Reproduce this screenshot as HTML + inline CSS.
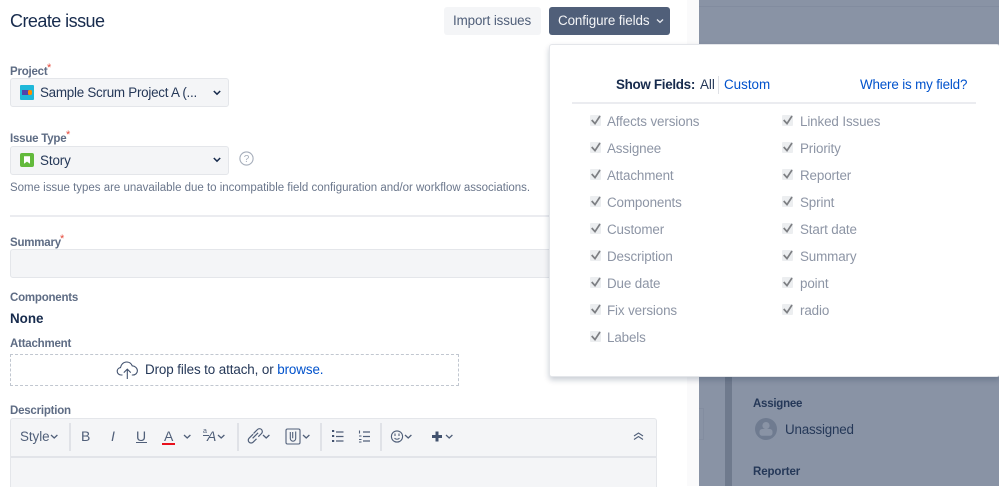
<!DOCTYPE html>
<html><head><meta charset="utf-8"><style>
html,body{margin:0;padding:0}
body{width:999px;height:486px;overflow:hidden;position:relative;background:#fff;font-family:"Liberation Sans",sans-serif;color:#172b4d}
.a{position:absolute}
.t{position:absolute;white-space:nowrap;line-height:16px}
.lbl{font-size:11.5px;font-weight:bold;color:#5e6c84;letter-spacing:-.22px}
.req{position:absolute;color:#e5493a;font-size:11px;line-height:10px}
.sel{position:absolute;left:10px;width:217px;height:27px;background:#f4f5f7;border:1px solid #e4e6ea;border-radius:3px}
.cb{position:absolute;width:11px;height:11px;background:#eceef0;border-radius:1px}
.cb svg{position:absolute;left:0;top:-2px}
.f{position:absolute;font-size:13.4px;color:#8d95a5;white-space:nowrap;line-height:16px;letter-spacing:-.12px}
.d{position:absolute;top:423px;width:2px;height:28px;background:#e0e2e7}
</style></head><body>
<svg width="0" height="0" style="position:absolute"><defs><symbol id="c" viewBox="0 0 12 12"><path d="M1.700 7 5 10.600 10 3" fill="none" stroke="#7d7f83" stroke-width="1.700"/></symbol></defs></svg>

<!-- right dimmed background -->
<div class="a" style="left:687px;top:0;width:12px;height:486px;background:#fafafb"></div>
<div class="a" style="left:699px;top:0;width:300px;height:486px;background:#8993a5"></div>
<div class="a" style="left:699px;top:6px;width:300px;height:1px;background:#828c9f"></div>
<div class="a" style="left:725px;top:370px;width:7px;height:116px;background:#6f7a8d"></div>
<div class="a" style="left:699px;top:408px;width:4px;height:30px;border:1px solid #838da0;border-left:0"></div>
<div class="t" style="left:753px;top:396px;font-size:11.5px;font-weight:bold;color:#253858;letter-spacing:-.25px">Assignee</div>
<svg class="a" style="left:754px;top:417px" width="24" height="24" viewBox="0 0 24 24"><circle cx="12" cy="12" r="11" fill="#6f7b90"/><circle cx="12" cy="8.600" r="3.600" fill="#8993a5"/><rect x="5.500" y="12" width="13" height="6.800" rx="2.600" fill="#8993a5"/></svg>
<div class="t" style="left:785px;top:422px;font-size:13.4px;color:#253858;letter-spacing:-.2px">Unassigned</div>
<div class="t" style="left:753px;top:464px;font-size:11.5px;font-weight:bold;color:#253858;letter-spacing:-.1px">Reporter</div>

<!-- header -->
<div class="t" style="left:10px;top:11px;font-size:18px;line-height:21px;color:#172b4d;letter-spacing:-.55px">Create issue</div>
<div class="a" style="left:444px;top:7px;width:97px;height:28px;background:#f4f5f7;border-radius:3px"></div>
<div class="t" style="left:453px;top:13px;font-size:13.4px;color:#505f79;letter-spacing:-.12px">Import issues</div>
<div class="a" style="left:549px;top:7px;width:121px;height:28px;background:#505f79;border-radius:3px"></div>
<div class="t" style="left:558px;top:13px;font-size:13.4px;color:#f4f5f7;letter-spacing:-.1px">Configure fields</div>
<svg class="a" style="left:655px;top:17px" width="10" height="8" viewBox="0 0 10 8"><path d="M2 2.500 5 5.300 8 2.500" fill="none" stroke="#e6e8ee" stroke-width="1.300"/></svg>

<!-- project -->
<div class="t lbl" style="left:10px;top:64px">Project</div>
<div class="req" style="left:47px;top:63px">*</div>
<div class="sel" style="top:78px"></div>
<svg class="a" style="left:20px;top:85px" width="14" height="15" viewBox="0 0 14 15"><rect width="14" height="15" rx="1" fill="#1fb8d9"/><rect x="2" y="5" width="6.500" height="5" fill="#5243aa"/><rect x="8" y="5" width="4" height="5" rx="1.500" fill="#ff8b00"/></svg>
<div class="t" style="left:40px;top:85px;font-size:13.4px;color:#253858;letter-spacing:-.25px">Sample Scrum Project A (...</div>
<svg class="a" style="left:212px;top:89px" width="10" height="8" viewBox="0 0 10 8"><path d="M1.800 2 5 5.200 8.200 2" fill="none" stroke="#172b4d" stroke-width="1.500"/></svg>

<!-- issue type -->
<div class="t lbl" style="left:10px;top:131px">Issue Type</div>
<div class="req" style="left:66px;top:130px">*</div>
<div class="sel" style="top:146px"></div>
<svg class="a" style="left:20px;top:153px" width="14" height="14" viewBox="0 0 14 14"><rect width="14" height="14" rx="2" fill="#63ba3c"/><path d="M4 3.200h6v7.600L7 8.600 4 10.800z" fill="#fff"/></svg>
<div class="t" style="left:40px;top:153px;font-size:13.4px;color:#253858;letter-spacing:-.1px">Story</div>
<svg class="a" style="left:212px;top:156px" width="10" height="8" viewBox="0 0 10 8"><path d="M1.800 2 5 5.200 8.200 2" fill="none" stroke="#172b4d" stroke-width="1.500"/></svg>
<svg class="a" style="left:239px;top:151px" width="15" height="15" viewBox="0 0 15 15"><circle cx="7.500" cy="7.500" r="6.600" fill="none" stroke="#a5adba" stroke-width="1.100"/><text x="7.500" y="11" text-anchor="middle" font-size="10" fill="#a5adba" font-family="Liberation Sans">?</text></svg>
<div class="t" style="left:10px;top:180px;font-size:11.5px;color:#6b778c;letter-spacing:-.015px">Some issue types are unavailable due to incompatible field configuration and/or workflow associations.</div>
<div class="a" style="left:10px;top:215px;width:540px;height:2px;background:#ebecf0"></div>

<!-- summary -->
<div class="t lbl" style="left:10px;top:235px">Summary</div>
<div class="req" style="left:60px;top:234px">*</div>
<div class="a" style="left:10px;top:249px;width:545px;height:27px;background:#f4f5f7;border:1px solid #e4e6ea;border-radius:3px"></div>

<!-- components -->
<div class="t lbl" style="left:10px;top:290px">Components</div>
<div class="t" style="left:10px;top:311px;font-size:13.4px;font-weight:bold;color:#172b4d">None</div>

<!-- attachment -->
<div class="t lbl" style="left:10px;top:336px">Attachment</div>
<div class="a" style="left:10px;top:354px;width:447px;height:30px;border:1px dashed #c1c7d0"></div>
<svg class="a" style="left:116px;top:360px" width="23" height="20" viewBox="0 0 23 20"><path d="M6.500 15H5.200C3 15 1.200 13.400 1.200 11.300c0-1.900 1.400-3.400 3.300-3.700C5 4.400 7.400 2 10.600 2c2.600 0 4.700 1.500 5.600 3.800 2.800.2 5.200 2.300 5.200 5 0 2.400-2 4.200-4.600 4.200h-1" fill="none" stroke="#42526e" stroke-width="1.100"/><path d="M11.300 19V9.500M7.800 12.600l3.500-3.500 3.500 3.500" fill="none" stroke="#42526e" stroke-width="1.100"/></svg>
<div class="t" style="left:145px;top:362px;font-size:13.4px;color:#253858;letter-spacing:-.1px">Drop files to attach, or <span style="color:#0052cc">browse.</span></div>

<!-- description -->
<div class="t lbl" style="left:10px;top:403px">Description</div>
<div class="a" style="left:10px;top:418px;width:645px;height:68px;background:#f4f5f7;border:1px solid #e4e6ea;border-bottom:0;border-radius:3px 3px 0 0"></div>
<div class="a" style="left:11px;top:456px;width:645px;height:2px;background:#e2e4e9"></div>
<div class="t" style="left:20px;top:429px;font-size:13.4px;color:#505f79;letter-spacing:-.05px">Style</div>
<div class="d" style="left:69px"></div>
<div class="d" style="left:237px"></div>
<div class="d" style="left:320px"></div>
<div class="d" style="left:380px"></div>
<div class="t" style="left:81px;top:428px;font-size:14px;color:#505f79">B</div>
<div class="t" style="left:111px;top:428px;font-size:14px;font-style:italic;color:#505f79">I</div>
<div class="t" style="left:136px;top:428px;font-size:14px;color:#505f79">U</div>
<div class="a" style="left:136px;top:442px;width:11px;height:1px;background:#505f79"></div>
<div class="t" style="left:164px;top:428px;font-size:14px;color:#505f79">A</div>
<div class="a" style="left:162px;top:443px;width:13px;height:2px;background:#e8101c"></div>
<div class="t" style="left:203px;top:424px;font-size:7px;color:#505f79">a</div>
<div class="t" style="left:207px;top:428px;font-size:14px;font-style:italic;color:#505f79">A</div>
<svg class="a" style="left:0;top:0" width="999" height="486" viewBox="0 0 999 486" fill="none" stroke="#505f79">
<path d="M51 435l3.200 3 3.200-3M184 435l3.200 3 3.200-3M218 435l3.200 3 3.200-3M263 435l3.200 3 3.200-3M303 435l3.200 3 3.200-3M405 435l3.200 3 3.200-3M446 435l3.200 3 3.200-3" stroke-width="1.300"/>
<path d="M203 435.500h6" stroke-width="1"/>
<path d="M253.500 433.500l4-4a2.800 2.800 0 0 1 4 4l-3.200 3.200M256.500 438.800l-3.400 3.400a2.800 2.800 0 0 1-4-4l4-4M252.600 438.300l5.500-5.500" stroke-width="1.200"/>
<rect x="286" y="429" width="14" height="15" rx="1.500" stroke-width="1.100"/>
<path d="M290.300 432v6.500a2.700 2.700 0 0 0 5.400 0V431.500M292.700 432v6.200" stroke-width="1.100"/>
<path d="M336 432h7.500M336 436.500h7.500M336 441h7.500" stroke-width="1.300"/>
<path d="M363 432h7M363 436.500h7M363 441h7" stroke-width="1.300"/>
<path d="M332 431h2.200M332 436h2.200M332 441h2.200" stroke="#42526e" stroke-width="2"/>
<path d="M359.500 430.500v3M359 436h2.500M359 439.500h2.500M359 442h2.500" stroke-width="1.100"/>
<circle cx="397" cy="436.500" r="5.600" stroke-width="1.100"/>
<path d="M395 433.500v2.500M399 433.500v2.500M394.500 438.200c1.500 1.300 3.500 1.300 5 0" stroke-width="1.100"/>
<path d="M437 431.500v10M432 436.500h10" stroke="#42526e" stroke-width="3"/>
<path d="M634 436l4.500-3 4.500 3M634 439.500l4.500-3 4.500 3" stroke-width="1.100"/>
</svg>

<!-- popup -->
<div class="a" style="left:549px;top:44px;width:449px;height:331px;background:#fff;border:1px solid #e4e6ea;border-radius:3px;box-shadow:0 3px 6px rgba(9,30,66,.22)"></div>
<div class="t" style="left:616px;top:77px;font-size:13.4px;font-weight:bold;color:#172b4d;letter-spacing:-.3px">Show Fields:</div>
<div class="t" style="left:700px;top:77px;font-size:13.4px;color:#253858">All</div>
<div class="a" style="left:718px;top:76px;width:1px;height:18px;background:#dfe1e6"></div>
<div class="t" style="left:724px;top:77px;font-size:13.4px;color:#0052cc">Custom</div>
<div class="t" style="left:860px;top:77px;font-size:13.4px;color:#0052cc;letter-spacing:-.16px">Where is my field?</div>
<div class="a" style="left:572px;top:102px;width:404px;height:2px;background:#ebecf0"></div>

<div class="cb" style="left:590px;top:115px"><svg width="12" height="12"><use href="#c"/></svg></div><div class="f" style="left:607px;top:114px">Affects versions</div>
<div class="cb" style="left:590px;top:142px"><svg width="12" height="12"><use href="#c"/></svg></div><div class="f" style="left:607px;top:141px">Assignee</div>
<div class="cb" style="left:590px;top:169px"><svg width="12" height="12"><use href="#c"/></svg></div><div class="f" style="left:607px;top:168px">Attachment</div>
<div class="cb" style="left:590px;top:196px"><svg width="12" height="12"><use href="#c"/></svg></div><div class="f" style="left:607px;top:195px">Components</div>
<div class="cb" style="left:590px;top:223px"><svg width="12" height="12"><use href="#c"/></svg></div><div class="f" style="left:607px;top:222px">Customer</div>
<div class="cb" style="left:590px;top:250px"><svg width="12" height="12"><use href="#c"/></svg></div><div class="f" style="left:607px;top:249px">Description</div>
<div class="cb" style="left:590px;top:277px"><svg width="12" height="12"><use href="#c"/></svg></div><div class="f" style="left:607px;top:276px">Due date</div>
<div class="cb" style="left:590px;top:304px"><svg width="12" height="12"><use href="#c"/></svg></div><div class="f" style="left:607px;top:303px">Fix versions</div>
<div class="cb" style="left:590px;top:331px"><svg width="12" height="12"><use href="#c"/></svg></div><div class="f" style="left:607px;top:330px">Labels</div>

<div class="cb" style="left:782px;top:115px"><svg width="12" height="12"><use href="#c"/></svg></div><div class="f" style="left:800px;top:114px">Linked Issues</div>
<div class="cb" style="left:782px;top:142px"><svg width="12" height="12"><use href="#c"/></svg></div><div class="f" style="left:800px;top:141px">Priority</div>
<div class="cb" style="left:782px;top:169px"><svg width="12" height="12"><use href="#c"/></svg></div><div class="f" style="left:800px;top:168px">Reporter</div>
<div class="cb" style="left:782px;top:196px"><svg width="12" height="12"><use href="#c"/></svg></div><div class="f" style="left:800px;top:195px">Sprint</div>
<div class="cb" style="left:782px;top:223px"><svg width="12" height="12"><use href="#c"/></svg></div><div class="f" style="left:800px;top:222px">Start date</div>
<div class="cb" style="left:782px;top:250px"><svg width="12" height="12"><use href="#c"/></svg></div><div class="f" style="left:800px;top:249px">Summary</div>
<div class="cb" style="left:782px;top:277px"><svg width="12" height="12"><use href="#c"/></svg></div><div class="f" style="left:800px;top:276px">point</div>
<div class="cb" style="left:782px;top:304px"><svg width="12" height="12"><use href="#c"/></svg></div><div class="f" style="left:800px;top:303px">radio</div>
</body></html>
